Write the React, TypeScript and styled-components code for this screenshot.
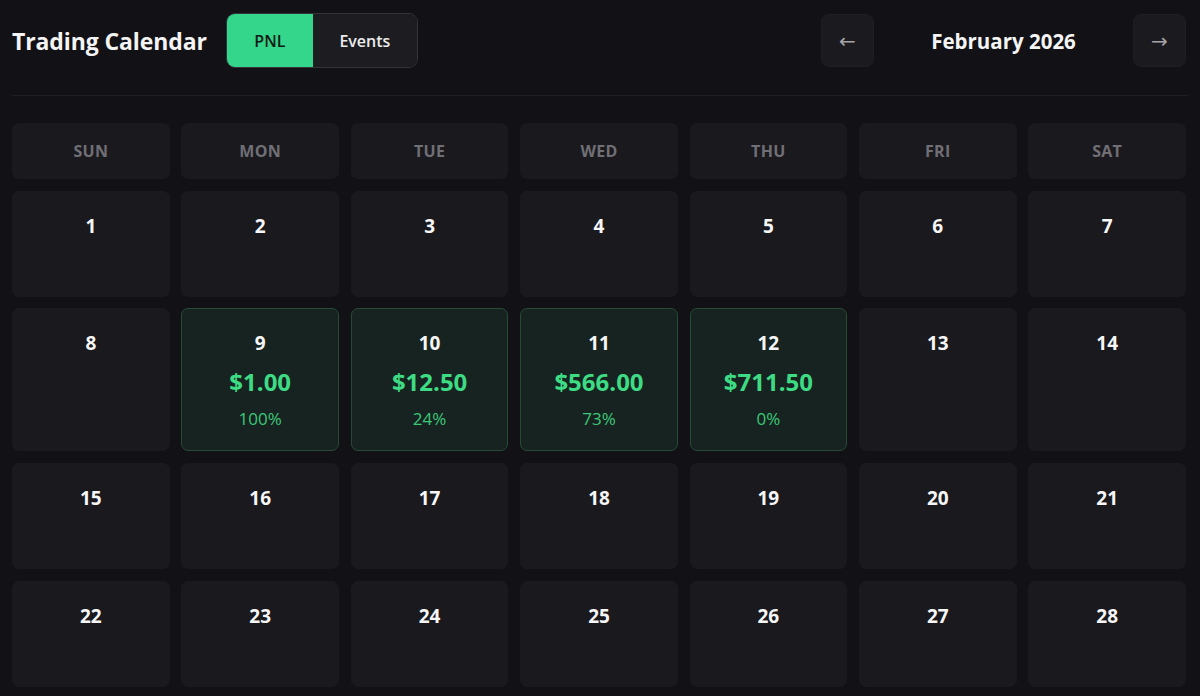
import React from "react";
import styled, { createGlobalStyle } from "styled-components";

const GlobalStyle = createGlobalStyle`
  html, body { margin: 0; padding: 0; background: #121116; }
  body { font-family: "Open Sans", "Noto Sans", "Liberation Sans", sans-serif; color: #f2f2f2; }
  * { box-sizing: border-box; }
`;

const Page = styled.div`
  padding: 13px 12px 0 12px;
  background: #121116;
  min-height: 696px;
`;

const Header = styled.header`
  display: flex;
  align-items: center;
  justify-content: space-between;
  padding-bottom: 27px;
  border-bottom: 1px solid #1f1e23;
  margin-bottom: 27px;
`;

const LeftGroup = styled.div`
  display: flex;
  align-items: center;
  gap: 19px;
`;

const Title = styled.h1`
  margin: 0;
  font-size: 23px;
  font-weight: 700;
  color: #f4f4f4;
  letter-spacing: -0.1px;
`;

const Toggle = styled.div`
  display: flex;
  height: 55px;
  border: 1px solid #34333a;
  border-radius: 9px;
  overflow: hidden;
`;

const ToggleButton = styled.button<{ $active?: boolean; $w: number }>`
  width: ${(p) => p.$w}px;
  border: none;
  font-family: inherit;
  font-size: 16px;
  font-weight: 600;
  background: ${(p) => (p.$active ? "#33d68b" : "#1d1c21")};
  color: ${(p) => (p.$active ? "#0c1a13" : "#ececec")};
  cursor: pointer;
`;

const Nav = styled.div`
  display: flex;
  align-items: center;
  margin-right: 2px;
`;

const NavButton = styled.button`
  width: 53px;
  height: 53px;
  border-radius: 8px;
  border: 1px solid #1f1e24;
  background: #1b1a1f;
  color: #a3a3a8;
  font-size: 20px;
  font-family: "DejaVu Sans", sans-serif;
  display: flex;
  align-items: center;
  justify-content: center;
  cursor: pointer;
`;

const Month = styled.div`
  width: 259px;
  text-align: center;
  font-size: 20.5px;
  font-weight: 700;
  color: #f4f4f4;
`;

const Grid = styled.div`
  display: grid;
  grid-template-columns: repeat(7, 1fr);
  gap: 11.7px;
  margin-right: 2px;
`;

const DayHead = styled.div`
  height: 56px;
  background: #1a191e;
  border-radius: 7px;
  display: flex;
  align-items: center;
  justify-content: center;
  font-size: 16px;
  font-weight: 700;
  color: #706f75;
  letter-spacing: 0.3px;
`;

const Cell = styled.div<{ $profit?: boolean }>`
  min-height: 106px;
  border-radius: 7px;
  background: ${(p) => (p.$profit ? "#172320" : "#1a191e")};
  border: 1px solid ${(p) => (p.$profit ? "#274a35" : "#1a191e")};
  display: flex;
  flex-direction: column;
  align-items: center;
  padding: 22px 8px 19px;
`;

const DayNum = styled.div`
  font-size: 19px;
  font-weight: 700;
  line-height: 24px;
  color: #f6f6f6;
`;

const Amount = styled.div`
  margin-top: 12px;
  font-size: 24px;
  font-weight: 700;
  line-height: 30px;
  color: #3ddc84;
`;

const Percent = styled.div`
  margin-top: 10px;
  font-size: 17px;
  font-weight: 400;
  line-height: 24px;
  color: #3bc878;
`;

const days = ["SUN", "MON", "TUE", "WED", "THU", "FRI", "SAT"];
const pnl: Record<number, { amt: string; pct: string }> = {
  9: { amt: "$1.00", pct: "100%" },
  10: { amt: "$12.50", pct: "24%" },
  11: { amt: "$566.00", pct: "73%" },
  12: { amt: "$711.50", pct: "0%" },
};

export default function App() {
  const dates = Array.from({ length: 28 }, (_, i) => i + 1);
  return (
    <>
      <GlobalStyle />
      <Page>
        <Header>
          <LeftGroup>
            <Title>Trading Calendar</Title>
            <Toggle>
              <ToggleButton $active $w={86}>PNL</ToggleButton>
              <ToggleButton $w={104}>Events</ToggleButton>
            </Toggle>
          </LeftGroup>
          <Nav>
            <NavButton>←</NavButton>
            <Month>February 2026</Month>
            <NavButton>→</NavButton>
          </Nav>
        </Header>
        <Grid>
          {days.map((d) => (
            <DayHead key={d}>{d}</DayHead>
          ))}
          {dates.map((n) => {
            const p = pnl[n];
            return (
              <Cell key={n} $profit={!!p}>
                <DayNum>{n}</DayNum>
                {p && (
                  <>
                    <Amount>{p.amt}</Amount>
                    <Percent>{p.pct}</Percent>
                  </>
                )}
              </Cell>
            );
          })}
        </Grid>
      </Page>
    </>
  );
}
